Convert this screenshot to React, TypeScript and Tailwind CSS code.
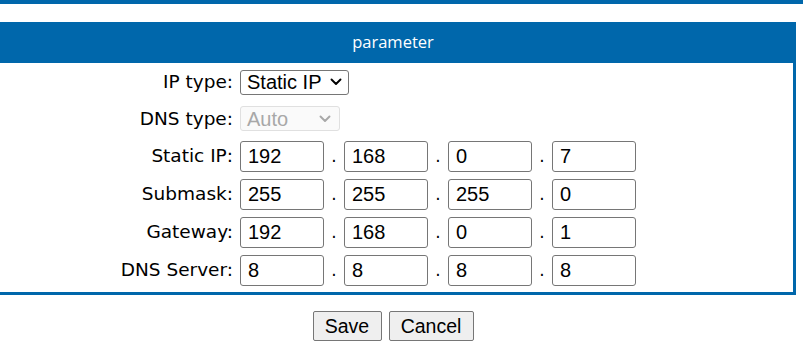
import React from "react";

const BLUE = "bg-[#0067ab]";

function Chevron({ color }: { color: string }) {
  return (
    <svg width="12" height="8" viewBox="0 0 12 8" className="shrink-0">
      <path d="M1.5 1.5 L6 6 L10.5 1.5" fill="none" stroke={color} strokeWidth="1.9" strokeLinecap="round" strokeLinejoin="round" />
    </svg>
  );
}

function Label({ children }: { children: React.ReactNode }) {
  return (
    <div className="w-[240px] mr-[7px] text-right text-[18.5px] text-black font-['DejaVu_Sans',Verdana,sans-serif] whitespace-nowrap">
      {children}
    </div>
  );
}

function IpRow({ label, values }: { label: string; values: string[] }) {
  return (
    <div className="flex items-center h-[38px]">
      <Label>{label}</Label>
      {values.map((v, i) => (
        <React.Fragment key={i}>
          {i > 0 && (
            <div className="w-[20px] h-[31px] flex items-end justify-center pb-[7px] text-[17px] leading-none text-black font-['DejaVu_Sans',sans-serif]">
              .
            </div>
          )}
          <input
            defaultValue={v}
            className="w-[84px] h-[31px] border border-[#767676] rounded-[3px] bg-white px-[7px] text-[20px] text-black font-['Liberation_Sans',Arial,sans-serif] outline-none"
          />
        </React.Fragment>
      ))}
    </div>
  );
}

export default function App() {
  return (
    <div className="w-[803px] h-[353px] bg-white overflow-hidden">
      <div className={`h-[4px] w-full ${BLUE}`} />
      <div className="ml-[-10px] w-[806px] mt-[18px]">
        <div className="border-l-[3px] border-r-[3px] border-b-[3px] border-[#0067ab]">
          <div className={`h-[41px] ${BLUE} -mx-[3px] flex items-center justify-center text-white text-[16.5px] font-['Open_Sans',sans-serif]`}>
            parameter
          </div>
          <div className="pb-[3px]">
            <div className="flex items-center h-[37px] pt-[1px]">
              <Label>IP type:</Label>
              <div className="w-[109px] h-[25px] border border-[#767676] rounded-[3px] bg-white flex items-center justify-between pl-[6px] pr-[6px] text-[20px] text-black font-['Liberation_Sans',Arial,sans-serif]">
                <span>Static IP</span>
                <Chevron color="#000" />
              </div>
            </div>
            <div className="flex items-center h-[37px]">
              <Label>DNS type:</Label>
              <div className="w-[100px] h-[25px] border border-[#e0e0e0] rounded-[3px] bg-[#fafafa] flex items-center justify-between pl-[6px] pr-[8px] text-[20px] text-[#a8a8a8] font-['Liberation_Sans',Arial,sans-serif]">
                <span>Auto</span>
                <Chevron color="#a8a8a8" />
              </div>
            </div>
            <IpRow label="Static IP:" values={["192", "168", "0", "7"]} />
            <IpRow label="Submask:" values={["255", "255", "255", "0"]} />
            <IpRow label="Gateway:" values={["192", "168", "0", "1"]} />
            <IpRow label="DNS Server:" values={["8", "8", "8", "8"]} />
          </div>
        </div>
        <div className="flex justify-center gap-[7px] mt-[16px]">
          <button className="w-[69px] h-[30px] bg-[#efefef] border border-[#767676] rounded-[2px] text-[19.5px] text-black font-['Liberation_Sans',Arial,sans-serif]">
            Save
          </button>
          <button className="w-[85px] h-[30px] bg-[#efefef] border border-[#767676] rounded-[2px] text-[19.5px] text-black font-['Liberation_Sans',Arial,sans-serif]">
            Cancel
          </button>
        </div>
      </div>
    </div>
  );
}
